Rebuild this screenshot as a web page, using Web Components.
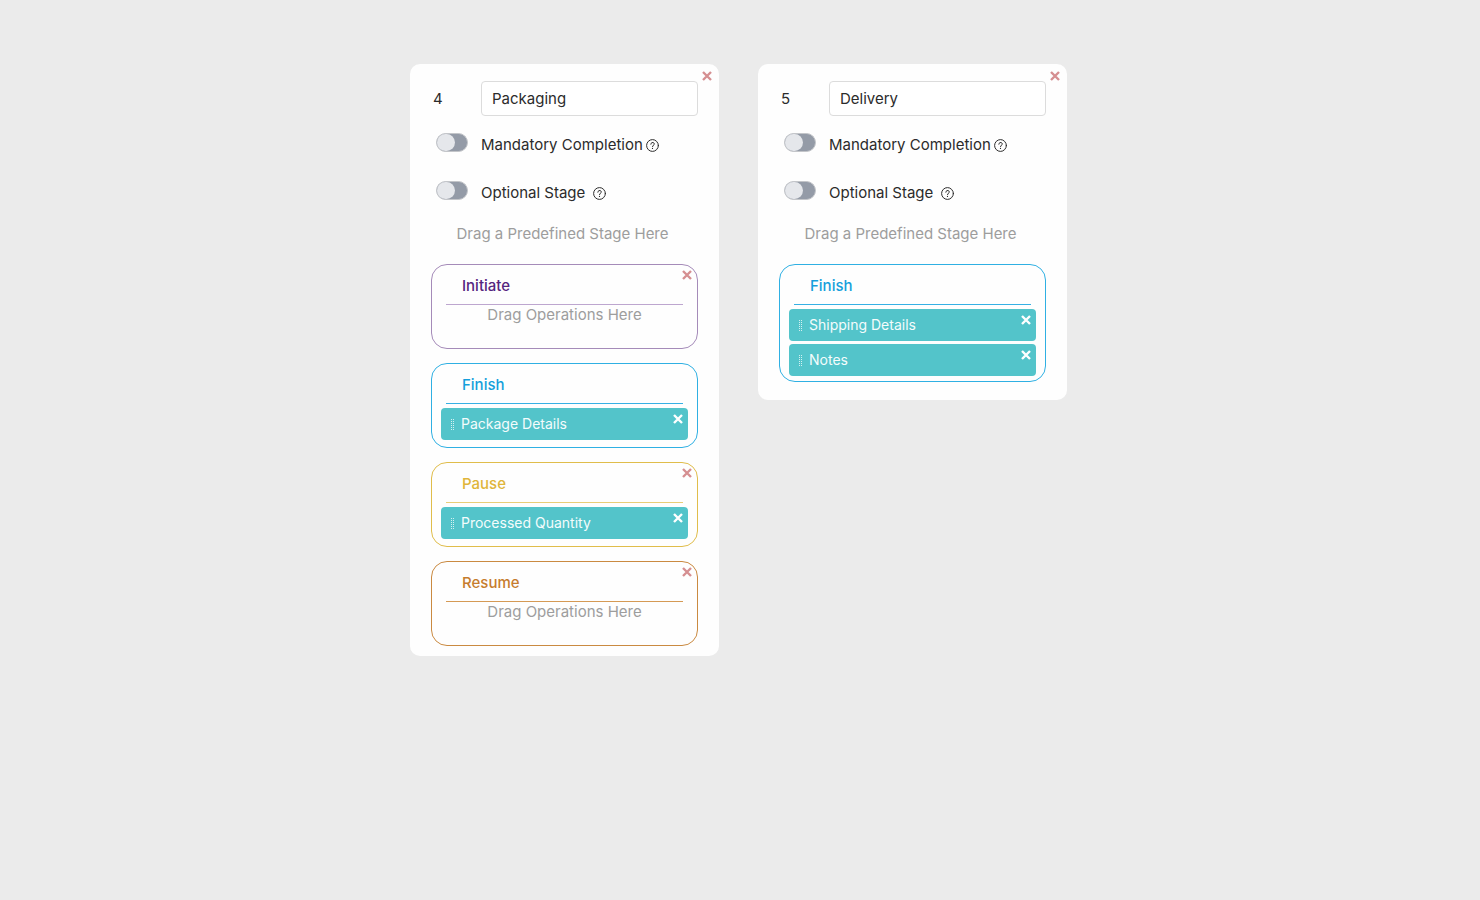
<!DOCTYPE html>
<html lang="en">
<head>
<meta charset="UTF-8">
<meta name="viewport" content="width=device-width, initial-scale=1.0">
<title>Workflow Stages</title>
<style>
  body {
    margin: 0;
    min-height: 100vh;
    background: #ebebeb;
    color: #2b2b2b;
    font-family: Inter, "Open Sans", sans-serif;
    font-size: 15px;
    line-height: 20px;
  }
</style>
</head>
<body>
<stage-board>
  <stage-card number="4" name="Packaging">
    <operation-group heading="Initiate" kind="initiate" removable></operation-group>
    <operation-group heading="Finish" kind="finish">
      <operation-item>Package Details</operation-item>
    </operation-group>
    <operation-group heading="Pause" kind="pause" removable>
      <operation-item>Processed Quantity</operation-item>
    </operation-group>
    <operation-group heading="Resume" kind="resume" removable></operation-group>
  </stage-card>
  <stage-card number="5" name="Delivery">
    <operation-group heading="Finish" kind="finish">
      <operation-item>Shipping Details</operation-item>
      <operation-item>Notes</operation-item>
    </operation-group>
  </stage-card>
</stage-board>

<script>
class StageBoard extends HTMLElement {
  connectedCallback() {
    this.attachShadow({ mode: 'open' });
    this.shadowRoot.innerHTML = `
      <style>
        :host {
          display: block;
          padding: 64px 16px;
        }
        main {
          display: flex;
          flex-wrap: wrap;
          align-items: flex-start;
          gap: 39px;
          max-width: 660px;
          margin: 0 auto;
        }
      </style>
      <main><slot></slot></main>
    `;
  }
}

class CloseButton extends HTMLElement {
  connectedCallback() {
    this.attachShadow({ mode: 'open' });
    this.shadowRoot.innerHTML = `
      <style>
        :host {
          display: block;
          color: #d58f91;
        }
        button {
          display: block;
          padding: 0;
          border: 0;
          background: none;
          color: inherit;
          cursor: pointer;
        }
        svg {
          display: block;
        }
      </style>
      <button type="button" aria-label="Remove">
        <svg width="10" height="10" viewBox="0 0 10 10" fill="none" stroke="currentColor" stroke-width="2.4">
          <path d="M1 1l8 8M9 1L1 9"/>
        </svg>
      </button>
    `;
  }
}

class ToggleRow extends HTMLElement {
  connectedCallback() {
    this.attachShadow({ mode: 'open' });
    this.shadowRoot.innerHTML = `
      <style>
        :host {
          display: grid;
          grid-template-columns: 45px 1fr;
          align-items: start;
          padding-left: 5px;
        }
        input {
          appearance: none;
          box-sizing: border-box;
          width: 32px;
          height: 19px;
          margin: 0;
          border: 1px solid #c3c5c9;
          border-radius: 10px;
          background: #949ba7;
          cursor: pointer;
        }
        input::before {
          content: "";
          display: block;
          width: 18px;
          height: 17px;
          border-radius: 9px;
          background: #e5e7eb;
        }
        input:checked::before {
          margin-left: auto;
        }
        .text {
          display: flex;
          align-items: center;
          gap: 3px;
          line-height: 24px;
        }
        label {
          white-space: pre;
        }
        button {
          padding: 0;
          border: 0;
          background: none;
          color: inherit;
        }
        svg {
          display: block;
        }
      </style>
      <input type="checkbox" id="toggle">
      <div class="text">
        <label for="toggle"><slot></slot></label>
        <button type="button" aria-label="Help">
          <svg width="13" height="13" viewBox="0 0 13 13" fill="none" stroke="currentColor" stroke-linecap="round">
            <circle cx="6.5" cy="6.5" r="5.9"/>
            <path d="M4.8 5.2c0-2.4 3.5-2.2 3.5-.2 0 1.2-1.8 1.3-1.8 2.6"/>
            <path d="M6.5 9.4v.1" stroke-width="1.2"/>
          </svg>
        </button>
      </div>
    `;
  }
}

class StageCard extends HTMLElement {
  connectedCallback() {
    this.attachShadow({ mode: 'open' });
    this.shadowRoot.innerHTML = `
      <style>
        :host {
          display: block;
          position: relative;
          box-sizing: border-box;
          flex: 0 1 309px;
          min-height: 336px;
          padding: 17px 21px 10px;
          border-radius: 10px;
          background: #fefefe;
        }
        close-button {
          position: absolute;
          top: 7px;
          right: 7px;
        }
        .head {
          display: grid;
          grid-template-columns: 48px 1fr;
          align-items: center;
          padding-left: 2px;
        }
        .head input {
          box-sizing: border-box;
          width: 100%;
          height: 35px;
          padding: 0 10px;
          border: 1px solid #dcdcdc;
          border-radius: 4px;
          background: #fff;
          color: inherit;
          font: inherit;
        }
        .toggles {
          display: grid;
          gap: 24px;
          margin-top: 17px;
        }
        .hint {
          margin: 19px 0 20px;
          padding-right: 4px;
          color: #9d9d9d;
          text-align: center;
        }
        .groups {
          display: grid;
          gap: 14px;
        }
      </style>
      <close-button></close-button>
      <div class="head">
        <label for="name">${this.getAttribute('number')}</label>
        <input type="text" id="name" value="${this.getAttribute('name')}">
      </div>
      <div class="toggles">
        <toggle-row>Mandatory Completion</toggle-row>
        <toggle-row>Optional Stage </toggle-row>
      </div>
      <p class="hint">Drag a Predefined Stage Here</p>
      <div class="groups"><slot></slot></div>
    `;
  }
}

class OperationGroup extends HTMLElement {
  connectedCallback() {
    const removable = this.hasAttribute('removable');
    this.attachShadow({ mode: 'open' });
    this.shadowRoot.innerHTML = `
      <style>
        :host {
          display: block;
          position: relative;
          box-sizing: border-box;
          min-height: 85px;
          padding-bottom: 5px;
          border: 1px solid var(--edge);
          border-radius: 16px;
        }
        :host([kind="initiate"]) { --ink: #55257f; --edge: #a58bb9; --rule: #bda6cf; }
        :host([kind="finish"]) { --ink: #159fdb; --edge: #2fb0e3; --rule: #36b0e4; }
        :host([kind="pause"]) { --ink: #e0b53a; --edge: #e0bd4b; --rule: #e8cd78; }
        :host([kind="resume"]) { --ink: #c67c2e; --edge: #ca8a41; --rule: #d59a55; }
        close-button {
          position: absolute;
          top: 5px;
          right: 5px;
        }
        h3 {
          box-sizing: border-box;
          height: 40px;
          margin: 0 14px;
          padding: 11px 16px 0;
          border-bottom: 1px solid var(--rule);
          color: var(--ink);
          font-size: 15px;
          font-weight: 500;
        }
        .items {
          display: grid;
          gap: 3px;
          margin: 4px 9px 0;
        }
        .hint {
          margin: 0;
          color: #9d9d9d;
          text-align: center;
        }
      </style>
      ${removable ? '<close-button></close-button>' : ''}
      <h3>${this.getAttribute('heading')}</h3>
      ${this.children.length
        ? '<div class="items"><slot></slot></div>'
        : '<p class="hint">Drag Operations Here</p>'}
    `;
  }
}

class OperationItem extends HTMLElement {
  connectedCallback() {
    this.attachShadow({ mode: 'open' });
    this.shadowRoot.innerHTML = `
      <style>
        :host {
          display: flex;
          position: relative;
          align-items: center;
          gap: 6px;
          height: 32px;
          padding: 0 10px;
          border-radius: 4px;
          background: #53c4ca;
          color: #f4fcfc;
          font-size: 14px;
          cursor: grab;
        }
        close-button {
          position: absolute;
          top: 6px;
          right: 5px;
          color: #fff;
        }
      </style>
      <svg width="4" height="11" viewBox="0 0 4 11" fill="#d4f0f1" aria-hidden="true">
        <path d="M0 0h1v1H0zM2 0h1v1H2zM0 2h1v1H0zM2 2h1v1H2zM0 4h1v1H0zM2 4h1v1H2zM0 6h1v1H0zM2 6h1v1H2zM0 8h1v1H0zM2 8h1v1H2zM0 10h1v1H0zM2 10h1v1H2z"/>
      </svg>
      <span><slot></slot></span>
      <close-button></close-button>
    `;
  }
}

customElements.define('close-button', CloseButton);
customElements.define('toggle-row', ToggleRow);
customElements.define('operation-item', OperationItem);
customElements.define('operation-group', OperationGroup);
customElements.define('stage-card', StageCard);
customElements.define('stage-board', StageBoard);
</script>
</body>
</html>
